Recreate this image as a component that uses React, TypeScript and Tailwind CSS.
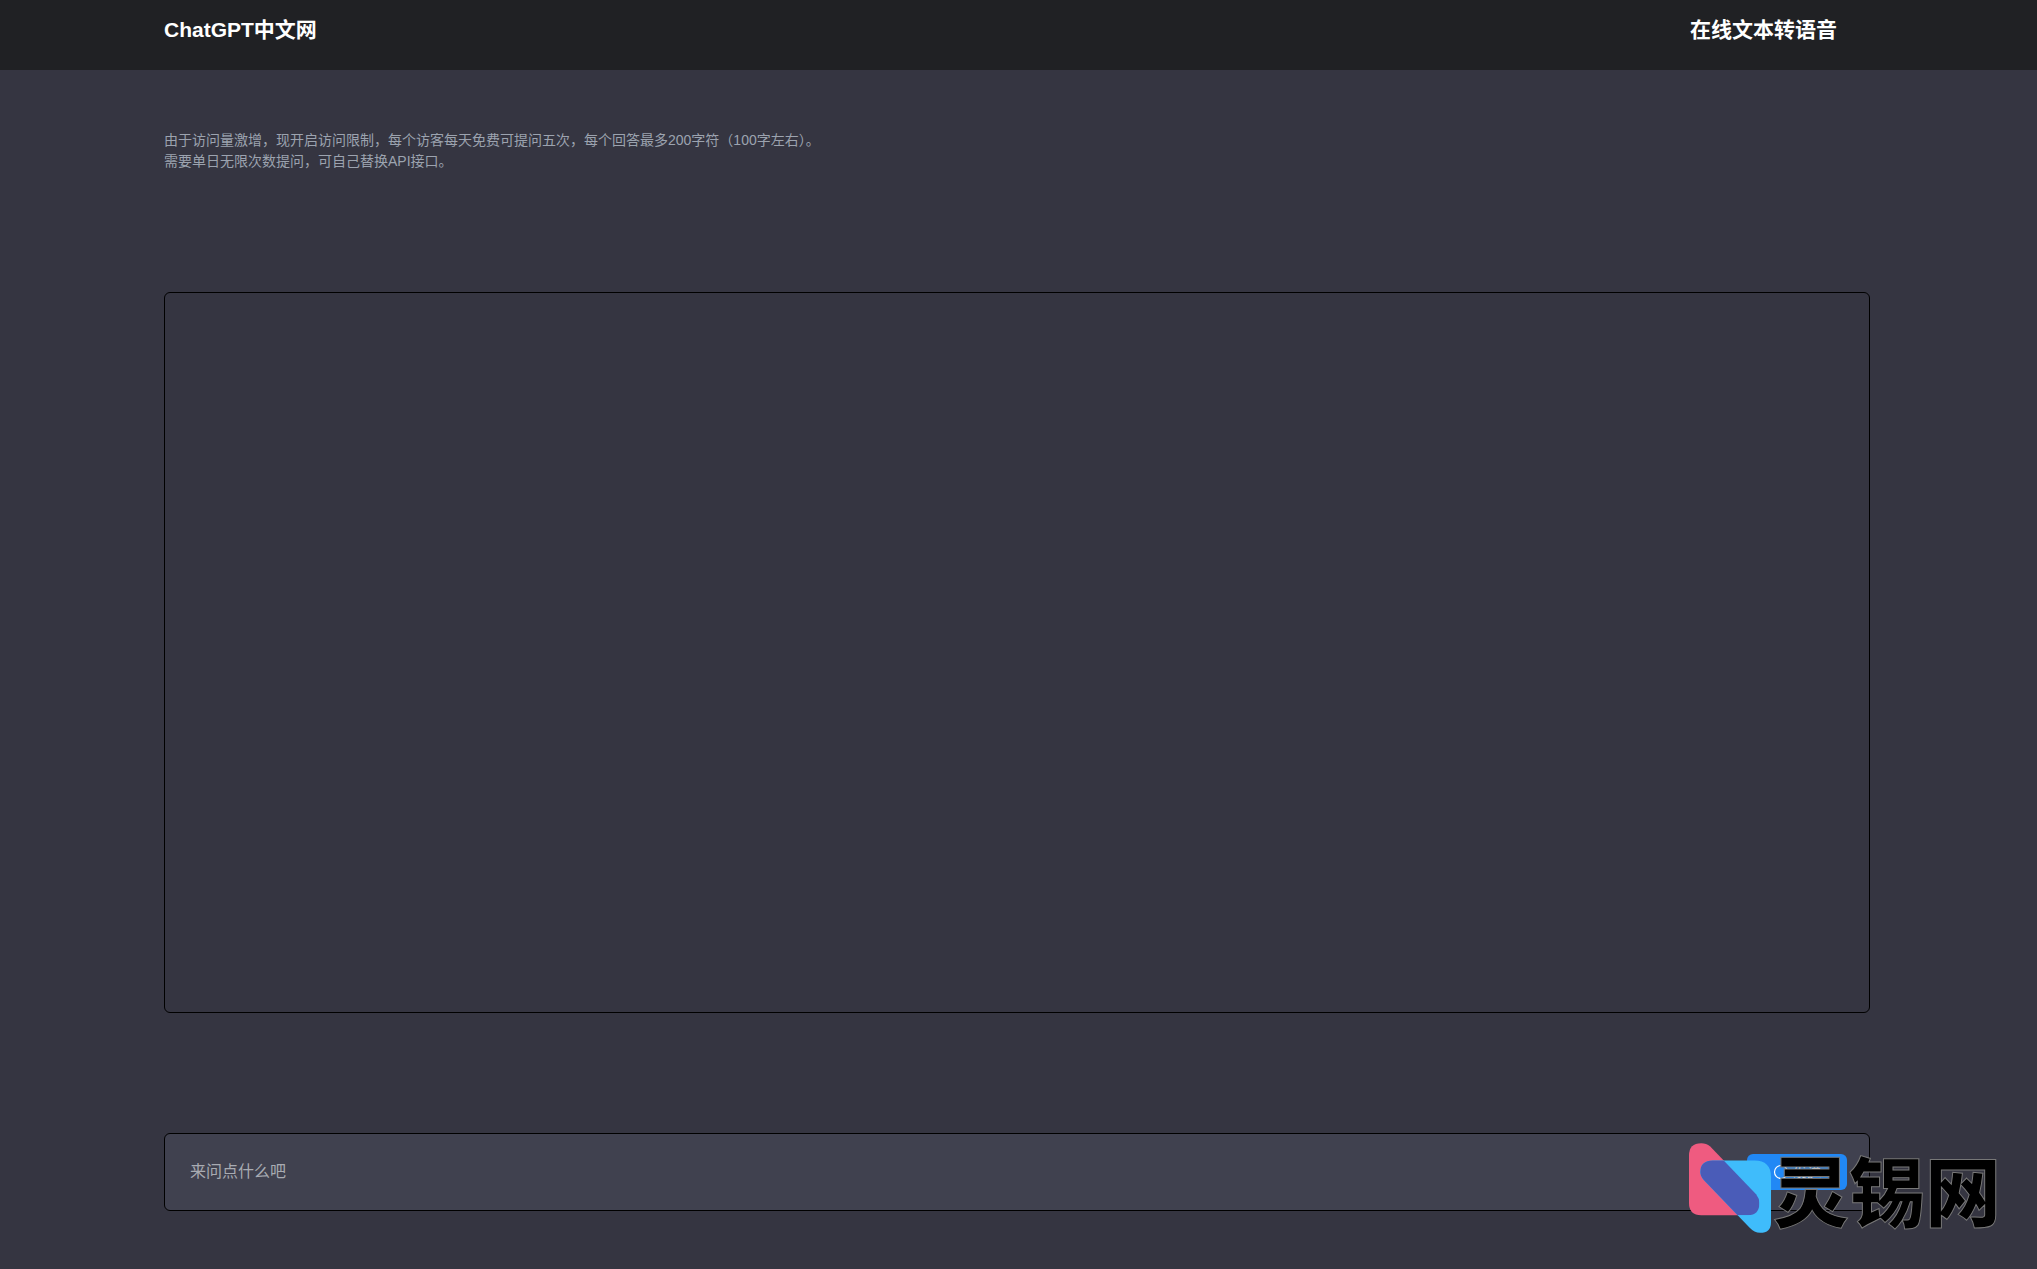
const fontStack = "font-['Liberation_Sans','Noto_Sans_CJK_SC',sans-serif]";

const pinkPath = "M88 105 Q88 68 125 68 Q140 68 152 78 L290 222 Q300 235 300 248 Q300 285 265 285 L125 285 Q88 285 88 248 Z";
const bluePath = "M122 155 Q122 120 160 120 L285 120 Q335 120 335 170 L335 305 Q335 338 302 338 Q285 338 270 322 L133 180 Q122 168 122 155 Z";

// full-width punctuation, as in the original notice
const notice1 = "由于访问量激增\uFF0C现开启访问限制\uFF0C每个访客每天免费可提问五次\uFF0C每个回答最多200字符\uFF08100字左右\uFF09。";
const notice2 = "需要单日无限次数提问\uFF0C可自己替换API接口。";

function Watermark() {
    return (
        <div className="absolute left-[1689px] top-[1143px] flex items-start">
            <svg width="88" height="95" viewBox="88 68 265 285" className="shrink-0">
                <defs>
                    <clipPath id="pink-clip">
                        <path d={pinkPath} />
                    </clipPath>
                </defs>
                <path d={pinkPath} fill="#ef5b80" />
                <path d={bluePath} fill="#3fbcfb" />
                <path d={bluePath} fill="#4a5cb8" clipPath="url(#pink-clip)" />
            </svg>
            <span className="ml-[-4px] mt-[3px] text-[76px] leading-[84px] font-black whitespace-nowrap text-black font-['Noto_Sans_CJK_SC',sans-serif] [-webkit-text-stroke:1px_#777]">
                灵锡网
            </span>
        </div>
    );
}

export default function App() {
    return (
        <div className={`relative h-[1269px] overflow-hidden bg-[#353541] ${fontStack}`}>
            <header className="h-[70px] bg-[#202124] pl-[164px] pr-[200px] flex items-start justify-between pt-[17px]">
                <a className="text-[21px] leading-[26px] font-bold text-white">ChatGPT中文网</a>
                <a className="text-[21px] leading-[26px] font-bold text-white">在线文本转语音</a>
            </header>

            <main className="px-[164px] w-[2034px]">
                <p className="mt-[60px] text-[14px] leading-[21px] text-[#9ca3af]">
                    {notice1}
                    <br />
                    {notice2}
                </p>

                <div className="mt-[120px] h-[721px] rounded-md border border-black bg-[#353541]" />

                <div className="mt-[120px] h-[78px] rounded-md border border-black bg-[#40414f] flex items-center justify-between pl-[25px] pr-[22px]">
                    <span className="text-[16px] text-[#a8abb2]">来问点什么吧</span>
                    <button className="w-[100px] h-[36px] rounded-md bg-[#2188f5] text-white text-[14px] flex items-center justify-center gap-1">
                        <svg width="16" height="16" viewBox="0 0 16 16" fill="none" stroke="white" strokeWidth="1.2">
                            <circle cx="8" cy="8" r="6.5" />
                        </svg>
                        发送
                    </button>
                </div>
            </main>

            <Watermark />
        </div>
    );
}
